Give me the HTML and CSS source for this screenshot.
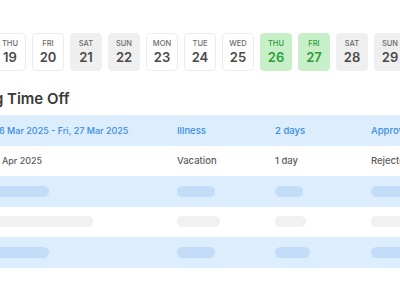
FILE: index.html
```html
<!DOCTYPE html>
<html>
<head>
<meta name="viewport" content="width=device-width, initial-scale=1">
<link rel="stylesheet" href="styles.css">
</head>
<body>

<div class="days">
  <div class="day"><span class="dname">THU</span><span class="dnum">19</span></div>
  <div class="day"><span class="dname">FRI</span><span class="dnum">20</span></div>
  <div class="day weekend"><span class="dname">SAT</span><span class="dnum">21</span></div>
  <div class="day weekend"><span class="dname">SUN</span><span class="dnum">22</span></div>
  <div class="day"><span class="dname">MON</span><span class="dnum">23</span></div>
  <div class="day"><span class="dname">TUE</span><span class="dnum">24</span></div>
  <div class="day"><span class="dname">WED</span><span class="dnum">25</span></div>
  <div class="day off"><span class="dname">THU</span><span class="dnum">26</span></div>
  <div class="day off"><span class="dname">FRI</span><span class="dnum">27</span></div>
  <div class="day weekend"><span class="dname">SAT</span><span class="dnum">28</span></div>
  <div class="day weekend"><span class="dname">SUN</span><span class="dnum">29</span></div>
</div>

<div class="section">
  <h2 class="title">Upcoming Time Off</h2>

  <div class="table">
    <div class="row active">
      <div class="cell date">Wed, 26 Mar 2025 - Fri, 27 Mar 2025</div>
      <div class="cell">Illness</div>
      <div class="cell">2 days</div>
      <div class="cell">Approved</div>
    </div>
    <div class="row">
      <div class="cell date">Tue, 01 Apr 2025</div>
      <div class="cell">Vacation</div>
      <div class="cell">1 day</div>
      <div class="cell">Rejected</div>
    </div>
    <div class="row active">
      <div class="cell"><span class="bar" style="width:80px"></span></div>
      <div class="cell"><span class="bar" style="width:38px"></span></div>
      <div class="cell"><span class="bar" style="width:28px"></span></div>
      <div class="cell"><span class="bar" style="width:40px"></span></div>
    </div>
    <div class="row">
      <div class="cell"><span class="bar" style="width:124px"></span></div>
      <div class="cell"><span class="bar" style="width:43px"></span></div>
      <div class="cell"><span class="bar" style="width:31px"></span></div>
      <div class="cell"><span class="bar" style="width:40px"></span></div>
    </div>
    <div class="row active">
      <div class="cell"><span class="bar" style="width:80px"></span></div>
      <div class="cell"><span class="bar" style="width:38px"></span></div>
      <div class="cell"><span class="bar" style="width:35px"></span></div>
      <div class="cell"><span class="bar" style="width:40px"></span></div>
    </div>
  </div>
</div>

</body>
</html>
```

FILE: styles.css
```css
body {
  margin: 0;
  background: #fff;
  font-family: Inter, "Open Sans", sans-serif;
  color: #555;
  overflow: hidden;
}

* {
  box-sizing: border-box;
}

/* Day strip */
.days {
  display: flex;
  gap: 6px;
  margin: 33px 0 0 -6px;
}

.day {
  flex: none;
  width: 32px;
  height: 38px;
  border: 1px solid #ececec;
  border-radius: 4px;
  background: #fff;
  display: flex;
  flex-direction: column;
  align-items: center;
  justify-content: center;
  color: #4a4a4a;
}

.dname {
  font-size: 7.5px;
  font-weight: 500;
  color: #6b6b6b;
  line-height: 10px;
}

.dnum {
  font-size: 13px;
  font-weight: 600;
  line-height: 16px;
}

.day.weekend {
  background: #efefef;
  border-color: #efefef;
}

.day.off {
  background: #c8f0c8;
  border-color: #c8f0c8;
}

.day.off .dname,
.day.off .dnum {
  color: #2f9b3c;
}

/* Time off table */
.section {
  margin-left: -31px;
}

.title {
  margin: 18px 0 0 -40px;
  font-size: 15px;
  font-weight: 600;
  color: #3a3a3a;
  line-height: 20px;
  height: 26px;
  white-space: nowrap;
}

.row {
  display: grid;
  grid-template-columns: 208px 98px 96px 1fr;
  height: 30.5px;
  align-items: center;
  font-size: 9.5px;
  font-weight: 500;
  color: #5c5c5c;
}

.row.active {
  background: #dcedfd;
  color: #3b8de3;
}

.cell {
  white-space: nowrap;
  overflow: hidden;
}

.cell.date {
  font-size: 9px;
}

.bar {
  display: block;
  height: 11px;
  border-radius: 6px;
  background: #f1f1f1;
}

.row.active .bar {
  background: #c3dcf7;
}
```
